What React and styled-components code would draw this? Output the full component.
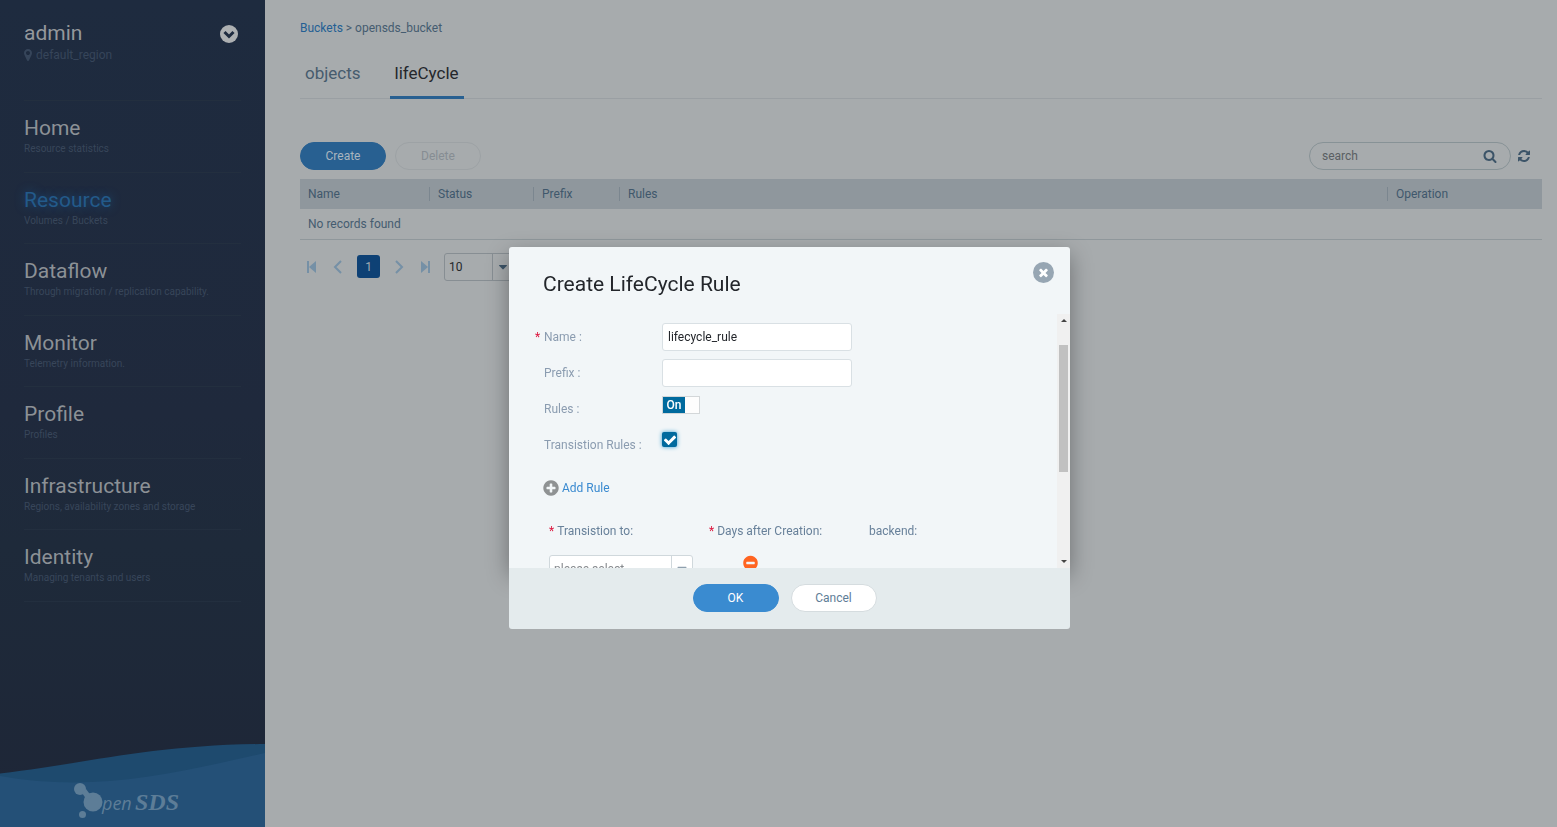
import React from "react";
import styled, { createGlobalStyle } from "styled-components";

const GlobalStyle = createGlobalStyle`
  *, *::before, *::after { box-sizing: border-box; }
  body {
    margin: 0;
    background: #a7abad;
    color: #455c70;
    font: 12px/16px Roboto, "Liberation Sans", sans-serif;
  }
  button, input, select { font: inherit; color: inherit; margin: 0; }
  button { cursor: pointer; }
  h1, h2, p, ul { margin: 0; padding: 0; }
  a { text-decoration: none; }
`;

const paths = {
  search:
    "M1216 832q0-185-131.5-316.5t-316.5-131.5-316.5 131.5-131.5 316.5 131.5 316.5 316.5 131.5 316.5-131.5 131.5-316.5zm512 832q0 52-38 90t-90 38q-54 0-90-38l-343-342q-179 124-399 124-143 0-273.5-55.5t-225-150-150-225-55.5-273.5 55.5-273.5 150-225 225-150 273.5-55.5 273.5 55.5 225 150 150 225 55.5 273.5q0 220-124 399l343 343q37 37 37 90z",
  refresh:
    "M1639 1056q0 5-1 7-64 268-268 434.5t-478 166.5q-146 0-282.5-55t-243.5-157l-129 129q-19 19-45 19t-45-19-19-45v-448q0-26 19-45t45-19h448q26 0 45 19t19 45-19 45l-137 137q71 66 161 102t187 36q134 0 250-65t186-179q11-17 53-117 8-23 30-23h192q13 0 22.5 9.5t9.5 22.5zm25-800v448q0 26-19 45t-45 19h-448q-26 0-45-19t-19-45 19-45l138-138q-148-137-349-137-134 0-250 65t-186 179q-11 17-53 117-8 23-30 23h-199q-13 0-22.5-9.5t-9.5-22.5v-7q65-268 270-434.5t480-166.5q146 0 284 55.5t245 156.5l130-129q19-19 45-19t45 19 19 45z",
  marker:
    "M1152 640q0-106-75-181t-181-75-181 75-75 181 75 181 181 75 181-75 75-181zm256 0q0 109-33 179l-364 774q-16 33-47.5 52t-67.5 19-67.5-19-46.5-52l-365-774q-33-70-33-179 0-212 150-362t362-150 362 150 150 362z",
  plus:
    "M1344 960v-128q0-26-19-45t-45-19h-256v-256q0-26-19-45t-45-19h-128q-26 0-45 19t-19 45v256h-256q-26 0-45 19t-19 45v128q0 26 19 45t45 19h256v256q0 26 19 45t45 19h128q26 0 45-19t19-45v-256h256q26 0 45-19t19-45zm320-64q0 209-103 385.5t-279.5 279.5-385.5 103-385.5-103-279.5-279.5-103-385.5 103-385.5 279.5-279.5 385.5-103 385.5 103 279.5 279.5 103 385.5z",
  minus:
    "M1344 960v-128q0-26-19-45t-45-19h-768q-26 0-45 19t-19 45v128q0 26 19 45t45 19h768q26 0 45-19t19-45zm320-64q0 209-103 385.5t-279.5 279.5-385.5 103-385.5-103-279.5-279.5-103-385.5 103-385.5 279.5-279.5 385.5-103 385.5 103 279.5 279.5 103 385.5z",
  close:
    "M1490 1322q0 40-28 68l-136 136q-28 28-68 28t-68-28l-294-294-294 294q-28 28-68 28t-68-28l-136-136q-28-28-28-68t28-68l294-294-294-294q-28-28-28-68t28-68l136-136q28-28 68-28t68 28l294 294 294-294q28-28 68-28t68 28l136 136q28 28 28 68t-28 68l-294 294 294 294q28 28 28 68z",
  check:
    "M1671 566q0 40-28 68l-724 724-136 136q-28 28-68 28t-68-28l-136-136-362-362q-28-28-28-68t28-68l136-136q28-28 68-28t68 28l294 295 656-657q28-28 68-28t68 28l136 136q28 28 28 68z",
  caret:
    "M1408 704q0 26-19 45l-448 448q-19 19-45 19t-45-19l-448-448q-19-19-19-45t19-45 45-19h896q26 0 45 19t19 45z",
};

const Glyph = ({ name, size = 14, color = "currentColor" }) => (
  <svg width={size} height={size} viewBox="0 0 1792 1792" fill={color} aria-hidden="true">
    <path d={paths[name]} />
  </svg>
);

/* ---------- shell ---------- */

const Shell = styled.div`
  display: flex;
  min-height: 100vh;
`;

const Sidebar = styled.aside`
  flex: none;
  width: 265px;
  display: flex;
  flex-direction: column;
  background: linear-gradient(#1e2b3f, #1f293c 50%, #1e2a3a 66%, #1e2637);
`;

const Account = styled.header`
  display: flex;
  justify-content: space-between;
  align-items: flex-start;
  height: 101px;
  margin: 0 24px;
  padding: 20px 3px 0 0;
  border-bottom: 1px solid #232f3f;
`;

const UserName = styled.h1`
  font-size: 21px;
  line-height: 26px;
  font-weight: 400;
  color: #94989c;
`;

const Region = styled.p`
  display: flex;
  align-items: center;
  gap: 1px;
  margin-top: 1px;
  margin-left: -3px;
  color: #36455a;
`;

const AccountButton = styled.button`
  display: flex;
  margin-top: 5px;
  padding: 0;
  border: 0;
  background: none;
`;

const Nav = styled.nav`
  display: grid;
  grid-template-rows: repeat(7, 1fr);
  height: 501px;
  margin: 0 24px;
`;

const NavLink = styled.a`
  padding-top: 14px;
  border-bottom: 1px solid #232f3f;
  font-size: 21px;
  line-height: 26px;
  color: ${(p) => (p.$active ? "#235a8a" : "#8c9196")};
  text-shadow: ${(p) => (p.$active ? "0 0 10px #1d4f80" : "none")};
`;

const NavNote = styled.small`
  display: block;
  font-size: 10px;
  line-height: 15px;
  color: #38465a;
  text-shadow: none;
  white-space: nowrap;
`;

const Brand = styled.svg`
  display: block;
  margin-top: auto;
  width: 100%;
`;

const Main = styled.main`
  flex: 1;
  min-width: 0;
  padding: 20px 15px 0 35px;
`;

const Breadcrumb = styled.nav`
  a { color: #235f94; }
`;

const Tabs = styled.div`
  display: flex;
  gap: 24px;
  height: 63px;
  border-bottom: 1px solid #9a9fa3;
`;

const Tab = styled.button`
  height: 63px;
  padding: 14px 5px 0;
  border: 0;
  border-bottom: 3px solid ${(p) => (p.$active ? "#286091" : "transparent")};
  background: none;
  font-size: 17px;
  line-height: 22px;
  color: ${(p) => (p.$active ? "#24272c" : "#465b6d")};
`;

const Toolbar = styled.div`
  display: flex;
  align-items: center;
  gap: 9px;
  margin: 43px 0 9px;
`;

const Pill = styled.button`
  width: 86px;
  height: 28px;
  padding: 0;
  border-radius: 14px;
  border: 1px solid ${(p) => p.$line};
  background: ${(p) => p.$fill};
  color: ${(p) => p.$ink};
`;

const SearchBox = styled.label`
  display: flex;
  align-items: center;
  width: 202px;
  height: 28px;
  margin-left: auto;
  padding: 0 13px 0 12px;
  border: 1px solid #879296;
  border-radius: 14px;
  color: #3c5468;
`;

const SearchInput = styled.input`
  flex: 1;
  min-width: 0;
  padding: 0;
  border: 0;
  outline: 0;
  background: none;
  &::placeholder { color: #5a5f63; opacity: 1; }
`;

const IconButton = styled.button`
  display: flex;
  align-items: center;
  justify-content: center;
  padding: 0;
  border: 0;
  background: none;
  color: ${(p) => p.$ink};
`;

const RefreshButton = styled(IconButton)`
  width: 14px;
  margin: 0 11px 0 -3px;
`;

const Grid = styled.table`
  width: 100%;
  table-layout: fixed;
  border-collapse: collapse;
`;

const HeadCell = styled.th`
  width: ${(p) => p.$width};
  height: 30px;
  padding: 0 8px;
  font-weight: 400;
  text-align: left;
  color: #40586c;
  background: #8f979d;
  & + & {
    padding-left: 9px;
    background: linear-gradient(#7b868f, #7b868f) left center / 1px 14px no-repeat #8f979d;
  }
`;

const Cell = styled.td`
  height: 30px;
  padding: 0 8px;
  border-bottom: 1px solid #8f979b;
`;

const Pager = styled.div`
  display: flex;
  align-items: center;
  margin-top: 13px;
  padding-left: 5px;
`;

const PageArrow = styled(IconButton)`
  width: 14px;
  margin-right: 12px;
`;

const PageNumber = styled.button`
  width: 23px;
  height: 23px;
  margin-right: 12px;
  padding: 0;
  border: 0;
  border-radius: 3px;
  background: #0e4175;
  color: #a2abb3;
`;

const SelectBox = styled.span`
  display: grid;
  grid-template-columns: 1fr 21px;
  width: ${(p) => p.$width};
  height: 28px;
  border: 1px solid ${(p) => p.$line};
  border-radius: 3px;
  background: ${(p) => p.$fill || "none"};
  color: ${(p) => p.$ink};
`;

const SelectControl = styled.select`
  grid-area: 1 / 1 / 2 / 3;
  padding: 0 0 0 4px;
  border: 0;
  outline: 0;
  appearance: none;
  background: none;
`;

const SelectArrow = styled.span`
  grid-area: 1 / 2 / 2 / 3;
  display: flex;
  align-items: center;
  justify-content: center;
  border-left: 1px solid ${(p) => p.$line};
  pointer-events: none;
  color: ${(p) => p.$ink};
`;

/* ---------- dialog ---------- */

const Overlay = styled.div`
  position: fixed;
  inset: 0;
  display: flex;
  justify-content: center;
  align-items: flex-start;
  padding: 247px 0 0 22px;
`;

const Dialog = styled.section`
  width: 561px;
`;

const DialogPanel = styled.div`
  border-radius: 3px 3px 0 0;
  background: #f2f6f8;
  box-shadow: 0 8px 22px rgba(0, 0, 0, 0.35);
`;

const DialogHead = styled.header`
  display: flex;
  justify-content: space-between;
  align-items: flex-start;
  height: 67px;
  padding: 15px 16px 0 34px;
`;

const DialogTitle = styled.h2`
  padding-top: 9px;
  font-size: 21px;
  line-height: 26px;
  font-weight: 400;
  color: #23262b;
`;

const CloseButton = styled(IconButton)`
  width: 21px;
  height: 21px;
  border-radius: 50%;
  background: #97a6b3;
`;

const DialogBody = styled.div`
  display: flex;
  height: 254px;
`;

const Form = styled.form`
  flex: 1;
  min-width: 0;
  padding: 9px 0 0 26px;
  overflow: hidden;
`;

const Field = styled.div`
  display: grid;
  grid-template-columns: 9px 118px 190px;
  height: 28px;
  margin-bottom: 8px;
  line-height: 29px;
  color: #8b9cb0;
`;

const Star = styled.span`
  color: #dc143c;
`;

const FieldLabel = styled.label`
  grid-column: 2;
  white-space: pre;
`;

const TextInput = styled.input`
  width: 190px;
  height: 28px;
  padding: 0 5px;
  border: 1px solid #d9e0e4;
  border-radius: 3px;
  outline: 0;
  background: #fff;
  color: #23262b;
`;

const Switch = styled.span`
  display: grid;
  grid-template-columns: 22px 14px;
  width: 38px;
  height: 18px;
  margin-top: 1px;
  border: 1px solid #d3d7d9;
  background: #fdfdfd;
  line-height: 16px;
`;

const HiddenCheck = styled.input`
  grid-area: 1 / 1 / 2 / 3;
  appearance: none;
  width: 36px;
  height: 16px;
  z-index: 1;
`;

const SwitchOn = styled.span`
  grid-area: 1 / 1;
  background: #006a9e;
  color: #fff;
  font-weight: 500;
  text-align: center;
`;

const Tick = styled.span`
  display: grid;
  place-items: center;
  width: 15px;
  height: 15px;
  margin-top: 1px;
  border-radius: 2px;
  background: #006a9e;
  box-shadow: 0 0 4px #3a9fd0;
  svg { grid-area: 1 / 1; pointer-events: none; }
`;

const TickInput = styled.input`
  grid-area: 1 / 1;
  appearance: none;
  width: 15px;
  height: 15px;
`;

const AddRule = styled.button`
  display: flex;
  align-items: center;
  gap: 2px;
  height: 18px;
  margin: 20px 0 0 7px;
  padding: 0;
  border: 0;
  background: none;
  color: #3a8ad0;
`;

const RuleGrid = styled.div`
  display: grid;
  grid-template-columns: 160px 160px 160px;
  grid-template-rows: 16px 28px;
  row-gap: 16px;
  margin: 26px 0 0 14px;
  color: #68819a;
`;

const RuleLabel = styled.label`
  display: flex;
  gap: 3px;
`;

const RemoveButton = styled(IconButton)`
  width: 17px;
  height: 16px;
  margin-left: 33px;
`;

const ScrollTrack = styled.div`
  flex: none;
  display: flex;
  flex-direction: column;
  align-items: center;
  justify-content: space-between;
  width: 13px;
  padding: 5px 0;
  background: #f0f0f0;
`;

const ScrollThumb = styled.div`
  width: 9px;
  height: 127px;
  margin: 23px 0 auto;
  background: #c1c1c1;
`;

const DialogFoot = styled.footer`
  position: relative;
  display: flex;
  justify-content: center;
  gap: 12px;
  padding: 16px 10px 17px 0;
  border-radius: 0 0 3px 3px;
  background: #e4ebed;
`;

const navItems = [
  ["Home", "Resource statistics"],
  ["Resource", "Volumes / Buckets"],
  ["Dataflow", "Through migration / replication capability."],
  ["Monitor", "Telemetry information."],
  ["Profile", "Profiles"],
  ["Infrastructure", "Regions, availability zones and storage"],
  ["Identity", "Managing tenants and users"],
];

const columns = [
  ["Name", "129px"],
  ["Status", "104px"],
  ["Prefix", "86px"],
  ["Rules", "auto"],
  ["Operation", "155px"],
];

const BrandArt = () => (
  <Brand viewBox="0 0 265 84" role="img" aria-label="OpenSDS">
    <path d="M0 30.500C90 20 150 2 265 1V84H0Z" fill="#1e4a6e" />
    <path d="M0 33C90 49 165 33 265 10V84H0Z" fill="#245077" />
    <g fill="#5d7d97">
      <circle cx="80" cy="46" r="6" />
      <circle cx="93" cy="59" r="9.500" />
      <circle cx="82.500" cy="71.500" r="3.500" />
      <path d="M82 50L86 46L92 54L87 57Z" />
      <text x="102" y="67" fontFamily="'Open Sans', sans-serif" fontStyle="italic" fontSize="18">
        pen
      </text>
      <text x="135" y="67" fontFamily="'Liberation Serif', serif" fontStyle="italic" fontWeight="700" fontSize="24">
        SDS
      </text>
    </g>
  </Brand>
);

const Arrow = ({ d, points }) => (
  <svg width="14" height="14" viewBox="0 0 14 14" fill="none" stroke="#7590a6" strokeWidth="2" aria-hidden="true">
    {d && <path d={d} />}
    {points && <polygon points={points} fill="#7590a6" stroke="none" />}
  </svg>
);

export default function App() {
  return (
    <>
      <GlobalStyle />
      <Shell>
        <Sidebar>
          <Account>
            <div>
              <UserName>admin</UserName>
              <Region>
                <Glyph name="marker" size={14} />
                <span>default_region</span>
              </Region>
            </div>
            <AccountButton aria-label="Account menu">
              <svg width="18" height="18" viewBox="0 0 18 18" aria-hidden="true">
                <circle cx="9" cy="9" r="9" fill="#adb0b2" />
                <path d="M4.500 7L9 11.500L13.500 7" fill="none" stroke="#1e2b3f" strokeWidth="3" />
              </svg>
            </AccountButton>
          </Account>
          <Nav aria-label="Main">
            {navItems.map(([title, note]) => (
              <NavLink key={title} href="#" $active={title === "Resource"}>
                {title}
                <NavNote>{note}</NavNote>
              </NavLink>
            ))}
          </Nav>
          <BrandArt />
        </Sidebar>
        <Main>
          <Breadcrumb aria-label="Breadcrumb">
            <a href="#">Buckets</a> &gt; opensds_bucket
          </Breadcrumb>
          <Tabs role="tablist">
            <Tab role="tab">objects</Tab>
            <Tab role="tab" aria-selected="true" $active>lifeCycle</Tab>
          </Tabs>
          <Toolbar>
            <Pill $fill="#286091" $line="#286091" $ink="#a9b5bf">Create</Pill>
            <Pill $fill="transparent" $line="#9da2a5" $ink="#868d93">Delete</Pill>
            <SearchBox>
              <SearchInput placeholder="search" aria-label="search" />
              <Glyph name="search" size={14} />
            </SearchBox>
            <RefreshButton aria-label="Refresh" $ink="#3c5468">
              <Glyph name="refresh" size={14} />
            </RefreshButton>
          </Toolbar>
          <Grid>
            <thead>
              <tr>
                {columns.map(([name, width]) => (
                  <HeadCell key={name} $width={width}>{name}</HeadCell>
                ))}
              </tr>
            </thead>
            <tbody>
              <tr>
                <Cell colSpan={5}>No records found</Cell>
              </tr>
            </tbody>
          </Grid>
          <Pager>
            <PageArrow aria-label="First page">
              <Arrow d="M3 1V13" points="11,1 11,13 4,7" />
            </PageArrow>
            <PageArrow aria-label="Previous page">
              <Arrow d="M10 1L4 7L10 13" />
            </PageArrow>
            <PageNumber>1</PageNumber>
            <PageArrow aria-label="Next page">
              <Arrow d="M4 1L10 7L4 13" />
            </PageArrow>
            <PageArrow aria-label="Last page">
              <Arrow d="M11 1V13" points="3,1 3,13 10,7" />
            </PageArrow>
            <SelectBox $width="70px" $line="#878e93" $ink="#23272b">
              <SelectControl aria-label="Rows per page">
                <option>10</option>
              </SelectControl>
              <SelectArrow $line="#878e93" $ink="#3c5468">
                <Glyph name="caret" size={14} />
              </SelectArrow>
            </SelectBox>
          </Pager>
        </Main>
      </Shell>
      <Overlay>
        <Dialog role="dialog" aria-labelledby="dialog-title">
          <DialogPanel>
            <DialogHead>
              <DialogTitle id="dialog-title">Create LifeCycle Rule</DialogTitle>
              <CloseButton aria-label="Close" $ink="#fff">
                <Glyph name="close" size={13} />
              </CloseButton>
            </DialogHead>
            <DialogBody>
              <Form>
                <Field>
                  <Star>*</Star>
                  <FieldLabel htmlFor="name">Name :</FieldLabel>
                  <TextInput id="name" defaultValue="lifecycle_rule" />
                </Field>
                <Field>
                  <FieldLabel htmlFor="prefix">Prefix :</FieldLabel>
                  <TextInput id="prefix" />
                </Field>
                <Field>
                  <FieldLabel htmlFor="rules">Rules :</FieldLabel>
                  <Switch>
                    <HiddenCheck id="rules" type="checkbox" role="switch" defaultChecked />
                    <SwitchOn>On</SwitchOn>
                  </Switch>
                </Field>
                <Field>
                  <FieldLabel htmlFor="transition">Transistion Rules :</FieldLabel>
                  <Tick>
                    <TickInput id="transition" type="checkbox" defaultChecked />
                    <Glyph name="check" size={14} color="#fff" />
                  </Tick>
                </Field>
                <AddRule type="button">
                  <Glyph name="plus" size={18} color="#8f9293" />
                  Add Rule
                </AddRule>
                <RuleGrid>
                  <RuleLabel htmlFor="target"><Star>*</Star>Transistion to:</RuleLabel>
                  <RuleLabel as="span"><Star>*</Star>Days after Creation:</RuleLabel>
                  <RuleLabel as="span">backend:</RuleLabel>
                  <SelectBox $width="144px" $line="#d0d8dc" $fill="#fff" $ink="#85898d">
                    <SelectControl id="target">
                      <option>please select</option>
                    </SelectControl>
                    <SelectArrow $line="#d0d8dc" $ink="#8fa0ae">
                      <Glyph name="caret" size={16} />
                    </SelectArrow>
                  </SelectBox>
                  <RemoveButton type="button" aria-label="Remove rule" $ink="#ff6421">
                    <Glyph name="minus" size={18} />
                  </RemoveButton>
                </RuleGrid>
              </Form>
              <ScrollTrack>
                <svg width="6" height="3" viewBox="0 0 6 3" aria-hidden="true">
                  <path d="M0 3L3 0L6 3Z" fill="#444" />
                </svg>
                <ScrollThumb />
                <svg width="6" height="3" viewBox="0 0 6 3" aria-hidden="true">
                  <path d="M0 0L3 3L6 0Z" fill="#444" />
                </svg>
              </ScrollTrack>
            </DialogBody>
          </DialogPanel>
          <DialogFoot>
            <Pill $fill="#3a8bd0" $line="#3a8bd0" $ink="#fff">OK</Pill>
            <Pill $fill="#fff" $line="#d5dcdf" $ink="#5e7d97">Cancel</Pill>
          </DialogFoot>
        </Dialog>
      </Overlay>
    </>
  );
}
